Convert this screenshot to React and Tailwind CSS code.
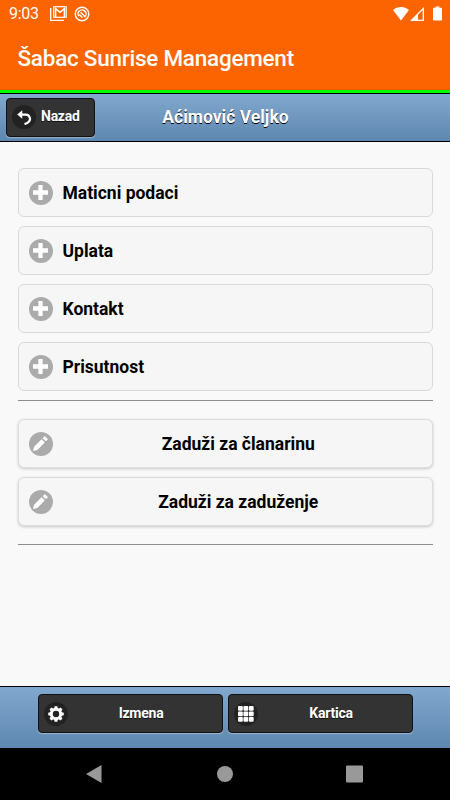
import clsx from "clsx";

const sections = ["Maticni podaci", "Uplata", "Kontakt", "Prisutnost"];
const charges = ["Zaduži za članarinu", "Zaduži za zaduženje"];

// The eight gear teeth, in degrees
const teeth = [0, 45, 90, 135, 180, 225, 270, 315];
const gridSteps = [0, 5.1, 10.2];

const PlusIcon = () => (
  <svg viewBox="0 0 14 14" className="w-[15px] h-[15px]" fill="#fff">
    <path d="M14 5H9V0H5v5H0v4h5v5h4V9h5z" />
  </svg>
);

const EditIcon = () => (
  <svg viewBox="0 0 14 14" className="w-[15px] h-[15px]" fill="#fff">
    <path d="M1 10l-1 4 4-1 7-7-3-3zM11 0L9 2l3 3 2-2z" />
  </svg>
);

const BackIcon = () => (
  <svg viewBox="0 0 14 14" className="w-[15px] h-[15px]" fill="none">
    <path d="M4.900 0.200L0.200 4.200l4.700 4z" fill="#fff" />
    <path
      d="M4 4.300h4.200a3.900 3.900 0 0 1 2.600 6.800q-1.200 1.300-3.800 2"
      stroke="#fff"
      strokeWidth="2.1"
    />
  </svg>
);

const GearIcon = () => (
  <svg viewBox="0 0 14 14" className="w-[16px] h-[16px]" fill="none">
    <circle cx="7" cy="7" r="4.1" stroke="#fff" strokeWidth="2.6" />
    {teeth.map((deg) => (
      <path
        key={deg}
        d="M5.300 2.600L5.800 0.200h2.400l0.500 2.400z"
        fill="#fff"
        transform={`rotate(${deg} 7 7)`}
      />
    ))}
  </svg>
);

const GridIcon = () => (
  <svg viewBox="0 0 15 15" className="w-[16px] h-[16px]" fill="#fff">
    {gridSteps.map((y) =>
      gridSteps.map((x) => (
        <rect key={`${x}-${y}`} x={x} y={y} width="4.5" height="4.5" rx="0.9" />
      ))
    )}
  </svg>
);

const IconDisc = ({ dark, children }) => (
  <span
    className={clsx(
      "w-6 h-6 shrink-0 rounded-full flex items-center justify-center",
      dark ? "bg-[#222222]" : "bg-[#ababab]"
    )}
  >
    {children}
  </span>
);

const StatusBar = () => (
  <div className="h-[27px] flex items-center justify-between pl-[9px] pr-[8px] text-white">
    <div className="flex items-center">
      <span className="w-[31px] pt-px text-[16px] leading-none tracking-[-0.3px]">9:03</span>
      <svg width="17" height="15" viewBox="0 0 17 15" fill="none" className="ml-[10px]">
        <path d="M0.700 2v12.300H14" stroke="#fff" strokeWidth="1.3" />
        <rect x="3.700" y="0.700" width="12.500" height="10.600" stroke="#fff" strokeWidth="1.2" />
        <path d="M5.600 11V2.600l4.400 3.700 4.400-3.700V11" stroke="#fff" strokeWidth="1.5" />
      </svg>
      <svg width="16" height="16" viewBox="0 0 16 16" fill="none" className="ml-[7px]">
        <circle cx="8" cy="8" r="6.800" stroke="#fff" strokeWidth="1.4" />
        <path d="M4.700 10.200A4 4 0 1 1 11.600 9.900" stroke="#fff" strokeWidth="1.3" />
        <path d="M6.600 6.300l5 5M5.300 8.400l3.200 3.300" stroke="#fff" strokeWidth="1.4" />
      </svg>
    </div>
    <div className="flex items-center">
      <svg width="16" height="14" viewBox="0 0 16 14" fill="#fff">
        <path d="M0 3C4.500-0.900 11.500-0.900 16 3L8 13.500z" />
      </svg>
      <svg width="15" height="14" viewBox="0 0 15 14" fill="none" className="ml-px">
        <path d="M1.600 13.300L13.300 1.600v11.700z" stroke="#fff" strokeWidth="1.3" />
        <path d="M1.500 13.300L8 6.800v6.500z" fill="#fff" />
      </svg>
      <svg width="9" height="15" viewBox="0 0 9 15" fill="#fff" className="ml-[8px]">
        <path d="M2.600 0.500h3.800v1.200H8.200q.8 0 .8.8v11.200q0 .8-.8.8H.8q-.8 0-.8-.8V2.500q0-.8.8-.8h1.800z" />
      </svg>
    </div>
  </div>
);

const FooterButton = ({ icon, label }) => (
  <button className="w-[185px] h-[39px] flex items-center rounded-[4px] border border-[#111] bg-[#333] pl-[5px] pr-[8px] text-white shadow-[0_1px_1px_rgba(255,255,255,0.35)]">
    <IconDisc dark>{icon}</IconDisc>
    <span className="flex-1 pb-px text-center text-[14px] tracking-[-0.25px] font-bold [text-shadow:0_1px_0_#111]">
      {label}
    </span>
  </button>
);

const App = () => {
  return (
    <div className="w-[450px] h-[800px] overflow-hidden flex flex-col bg-[#f9f9f9] font-[Roboto,sans-serif]">
      <header className="h-[90px] shrink-0 bg-[#fb6400] border-b border-[#e95a00]">
        <StatusBar />
        <h1 className="pl-[17.5px] pt-[15px] text-[22.5px] leading-8 tracking-[-0.25px] font-medium text-white">
          Šabac Sunrise Management
        </h1>
      </header>
      <div className="h-[3px] shrink-0 bg-[#00ff00]" />

      {/* Page toolbar */}
      <div className="h-[49px] shrink-0 grid grid-cols-[89px_1fr_89px] items-center pl-[6px] pr-[5px] pb-px border-y border-black bg-gradient-to-b from-[#81a8ce] to-[#5e87b0] text-white">
        <button className="h-[39px] w-[89px] flex items-center rounded-[4px] border border-[#111] bg-[#333] pl-[5px] shadow-[0_1px_1px_rgba(255,255,255,0.35)]">
          <IconDisc dark>
            <BackIcon />
          </IconDisc>
          <span className="ml-[5px] pb-px text-[14px] tracking-[-0.25px] font-bold [text-shadow:0_1px_0_#111]">
            Nazad
          </span>
        </button>
        <h2 className="pt-px text-center text-[17.5px] font-bold [text-shadow:0_1px_0_#000]">
          Aćimović Veljko
        </h2>
      </div>

      <main className="flex-1 pl-[17.5px] pr-[17px] pt-[26px] text-[17.5px] font-bold text-black">
        <div className="flex flex-col gap-[9px]">
          {sections.map((name) => (
            <button
              key={name}
              className="h-[49px] flex items-center rounded-[6px] border border-[#d9d9d9] bg-[#f6f6f6] pl-[10px] text-left"
            >
              <IconDisc>
                <PlusIcon />
              </IconDisc>
              <span className="ml-[10px] pt-px">{name}</span>
            </button>
          ))}
        </div>

        <hr className="mt-[9px] border-t border-[#8e8e8e]" />

        <div className="mt-[18px] flex flex-col gap-[9px]">
          {charges.map((name) => (
            <button
              key={name}
              className="h-[49px] flex items-center rounded-[6px] border border-[#dddddd] bg-[#f6f6f6] px-[10px] shadow-[0_1px_3px_rgba(0,0,0,0.2)]"
            >
              <IconDisc>
                <EditIcon />
              </IconDisc>
              <span className="flex-1 pl-[2px] pt-px text-center">{name}</span>
            </button>
          ))}
        </div>

        <hr className="mt-[18px] border-t border-[#8e8e8e]" />
      </main>

      <footer className="h-[62px] shrink-0 flex justify-center gap-[5px] pl-px pt-[7px] border-t border-black bg-gradient-to-b from-[#81a8ce] to-[#5e87b0]">
        <FooterButton icon={<GearIcon />} label="Izmena" />
        <FooterButton icon={<GridIcon />} label="Kartica" />
      </footer>

      {/* Android navigation */}
      <nav className="h-[52px] shrink-0 flex items-center justify-center gap-[109px] bg-black">
        <svg width="26" height="20" viewBox="0 0 26 20" fill="#999">
          <path d="M4 10L19.500 1v18z" />
        </svg>
        <svg width="16" height="16" viewBox="0 0 16 16" fill="#999">
          <circle cx="8" cy="8" r="8" />
        </svg>
        <svg width="26" height="18" viewBox="0 0 26 18" fill="#999">
          <rect x="4" y="0.500" width="17" height="17" rx="1" />
        </svg>
      </nav>
    </div>
  );
};

export default App;
